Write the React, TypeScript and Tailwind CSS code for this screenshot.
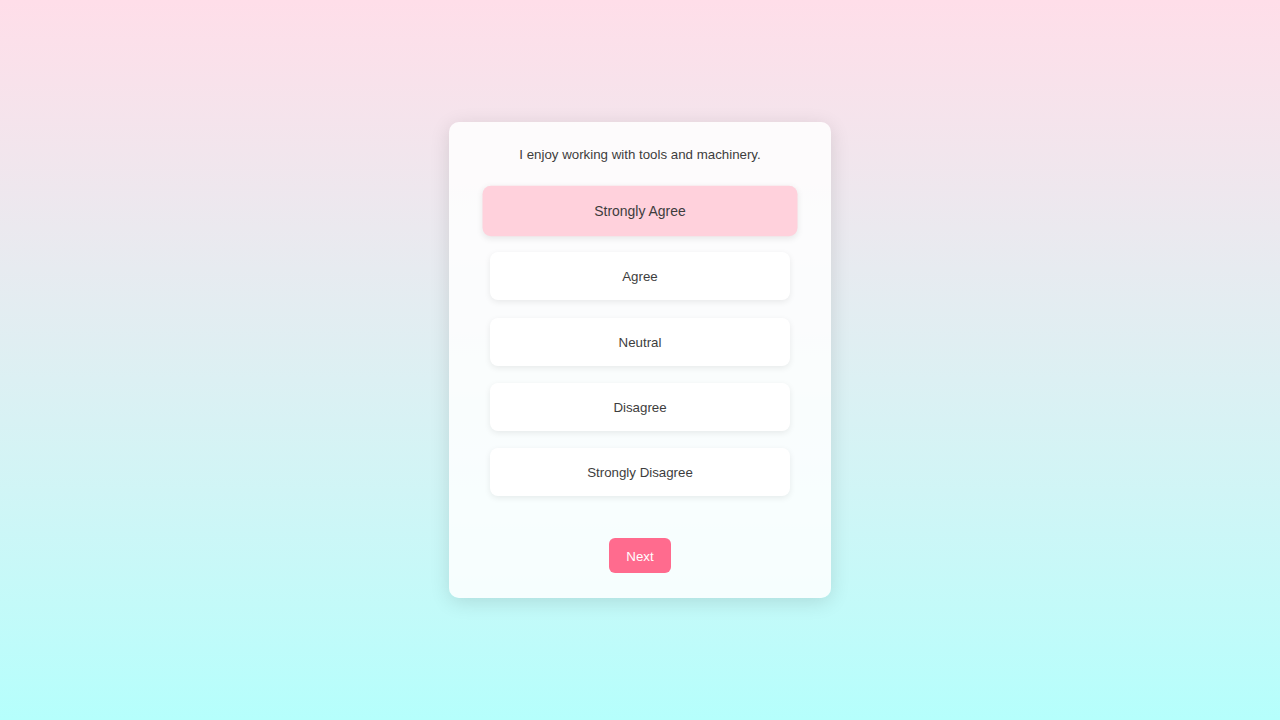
import { useState } from "react"

const options = ["Strongly Agree", "Agree", "Neutral", "Disagree", "Strongly Disagree"]

export default function App() {
  const [selected, setSelected] = useState(0)

  return (
    <div
      className="min-h-screen w-full flex items-center justify-center bg-gradient-to-b from-[#ffdee9] to-[#b5fffc] text-[#3d3d3d]"
      style={{ fontFamily: '"Liberation Sans", Arial, sans-serif' }}
    >
      <div className="w-[382px] rounded-[10px] bg-white/85 shadow-[0_4px_20px_rgba(0,0,0,0.12)] px-[41px] pt-[25px] pb-[25px] flex flex-col items-center">
        <p className="text-[13.3px] leading-4 text-center">I enjoy working with tools and machinery.</p>

        <div className="mt-[24px] w-full flex flex-col gap-[17.25px]">
          {options.map((opt, i) => (
            <button
              key={opt}
              onClick={() => setSelected(i)}
              className={
                i === selected
                  ? "h-12 w-full pt-[2px] rounded-[8px] bg-[#ffd1dc] text-[13.3px] text-[#3d3d3d] shadow-[0_2px_6px_rgba(0,0,0,0.08)] scale-[1.05]"
                  : "h-12 w-full pt-[2px] rounded-[8px] bg-white text-[13.3px] text-[#3d3d3d] shadow-[0_2px_6px_rgba(0,0,0,0.08)]"
              }
            >
              {opt}
            </button>
          ))}
        </div>

        <button className="mt-[42px] h-[35px] pt-[3px] px-[17px] rounded-[6px] bg-[#ff6b8e] text-white text-[13.3px]">
          Next
        </button>
      </div>
    </div>
  )
}
